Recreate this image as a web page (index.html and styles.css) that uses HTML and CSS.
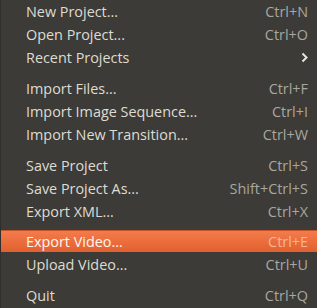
FILE: index.html
```html
<!DOCTYPE html>
<html>
<head>
  <meta charset="utf-8">
  <title>File menu</title>
  <link rel="stylesheet" href="styles.css">
</head>
<body>
  <ul class="menu">
    <li class="item"><span class="label">New Project...</span><span class="accel">Ctrl+N</span></li>
    <li class="item"><span class="label">Open Project...</span><span class="accel">Ctrl+O</span></li>
    <li class="item"><span class="label">Recent Projects</span>
      <svg class="arrow" width="7" height="11" viewBox="0 0 7 11"><path d="M1.5 1.5 L5.5 5.5 L1.5 9.5" fill="none" stroke="#e8e5de" stroke-width="2"/></svg>
    </li>
    <li class="sep"></li>
    <li class="item"><span class="label">Import Files...</span><span class="accel">Ctrl+F</span></li>
    <li class="item"><span class="label">Import Image Sequence...</span><span class="accel">Ctrl+I</span></li>
    <li class="item"><span class="label">Import New Transition...</span><span class="accel">Ctrl+W</span></li>
    <li class="sep"></li>
    <li class="item"><span class="label">Save Project</span><span class="accel">Ctrl+S</span></li>
    <li class="item"><span class="label">Save Project As...</span><span class="accel">Shift+Ctrl+S</span></li>
    <li class="item"><span class="label">Export XML...</span><span class="accel">Ctrl+X</span></li>
    <li class="sep"></li>
    <li class="item active"><span class="label">Export Video...</span><span class="accel">Ctrl+E</span></li>
    <li class="item"><span class="label">Upload Video...</span><span class="accel">Ctrl+U</span></li>
    <li class="sep"></li>
    <li class="item"><span class="label">Quit</span><span class="accel">Ctrl+Q</span></li>
  </ul>
</body>
</html>
```

FILE: styles.css
```css
html,
body {
  margin: 0;
  padding: 0;
  background-color: #3c3b37;
}

.menu {
  margin: 0;
  padding: 0;
  list-style: none;
  width: 317px;
  height: 308px;
  box-sizing: border-box;
  border-left: 1px solid #302f2c;
  font-family: "Open Sans", "DejaVu Sans", sans-serif;
  font-size: 14.4px;
  color: #dfdbd2;
  overflow: hidden;
}

.item {
  display: flex;
  align-items: center;
  justify-content: space-between;
  height: 23px;
  padding: 0 9px 0 25px;
  box-sizing: border-box;
}

.sep {
  height: 8px;
}

.accel {
  color: #aaa7a0;
}

.active {
  margin-top: -1px;
  height: 22px;
  margin-bottom: 1px;
  background: linear-gradient(#f47b4b, #e2602f);
  border-top: 1px solid #c4532a;
  color: #fff6f0;
}

.active .accel {
  color: #f6b596;
}
```
